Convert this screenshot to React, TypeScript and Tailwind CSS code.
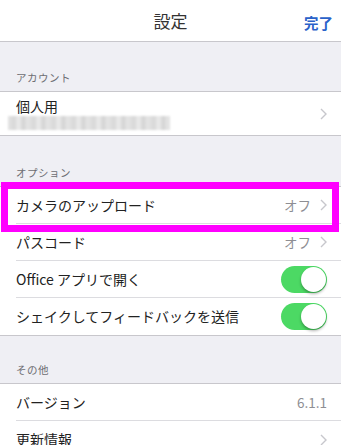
import React from "react";

const font = { fontFamily: '"Noto Sans CJK JP", "Noto Sans", sans-serif' };

function Chevron() {
  return (
    <svg width="7" height="12" viewBox="0 0 7 12" className="ml-[9px] shrink-0">
      <path d="M1 1l5 5-5 5" fill="none" stroke="#c7c7cc" strokeWidth="1.4" />
    </svg>
  );
}

function Toggle() {
  return (
    <div className="relative w-[46px] h-[27px] rounded-full bg-[#4cd964] mr-[14px]">
      <div className="absolute right-[1px] top-[1px] w-[25px] h-[25px] rounded-full bg-white shadow-[0_2px_3px_rgba(0,0,0,0.3)]" />
    </div>
  );
}

function SectionHeader({ title, short }: { title: string; short?: boolean }) {
  return (
    <div
      className={`${
        short ? "h-[47px]" : "h-[50px]"
      } flex items-end pl-4 pb-[5px] text-[10.5px] text-[#6d6d72] tracking-[0.5px]`}
    >
      {title}
    </div>
  );
}

interface RowProps {
  label: string;
  value?: string;
  chevron?: boolean;
  toggle?: boolean;
  last?: boolean;
}

function Row({ label, value, chevron, toggle, last }: RowProps) {
  return (
    <div className="pl-4 bg-white">
      <div
        className={`h-[37px] flex items-center justify-between ${
          last ? "" : "border-b border-[#dcdce0]"
        }`}
      >
        <span className="text-[14px] text-[#222]">{label}</span>
        <div className="flex items-center">
          {value && (
            <span className="text-[13.5px] text-[#8e8e93]">{value}</span>
          )}
          {chevron && <Chevron />}
          {chevron && <div className="w-[14px]" />}
          {!chevron && value && <div className="w-[14px]" />}
          {toggle && <Toggle />}
        </div>
      </div>
    </div>
  );
}

export default function App() {
  return (
    <div className="w-[341px] h-[445px] overflow-hidden bg-[#efeff4]" style={font}>
      {/* nav bar */}
      <div className="h-[42px] bg-white border-b border-[#c8c7cc] flex items-center justify-center relative">
        <span className="text-[17px] text-[#333]">設定</span>
        <span className="absolute right-[8px] top-[12px] text-[14.5px] font-bold text-[#2a62c9]">
          完了
        </span>
      </div>

      <div className="h-[50px] flex items-end pl-4 pb-[5px] text-[10.5px] text-[#6d6d72] tracking-[0.5px] -mt-[1px]">
        アカウント
      </div>
      <div className="bg-white border-y border-[#c8c7cc] h-[45px] pl-4 pr-[14px] flex items-center justify-between">
        <div className="flex flex-col">
          <span className="text-[14px] leading-[17px] text-[#222]">個人用</span>
          <div className="-ml-2 mt-[1px] w-[162px] h-[14px] blur-[1px] bg-[repeating-linear-gradient(90deg,#e4e4e4_0px,#d8d8d8_6px,#ececec_11px,#d3d3d3_15px,#e6e6e6_20px)]" />
        </div>
        <Chevron />
      </div>

      <SectionHeader title="オプション" />
      <div className="border-y border-[#c8c7cc] bg-white">
        <div className="relative">
          <Row label="カメラのアップロード" value="オフ" chevron />
          <div className="absolute left-[1px] right-[2px] -top-[5px] -bottom-[8px] border-[7px] border-[#ff00ff] pointer-events-none" />
        </div>
        <Row label="パスコード" value="オフ" chevron />
        <Row label="Office アプリで開く" toggle />
        <Row label="シェイクしてフィードバックを送信" toggle last />
      </div>

      <SectionHeader title="その他" short />
      <div className="border-t border-[#c8c7cc] bg-white">
        <Row label="バージョン" value="6.1.1" />
        <Row label="更新情報" chevron last />
      </div>
    </div>
  );
}
